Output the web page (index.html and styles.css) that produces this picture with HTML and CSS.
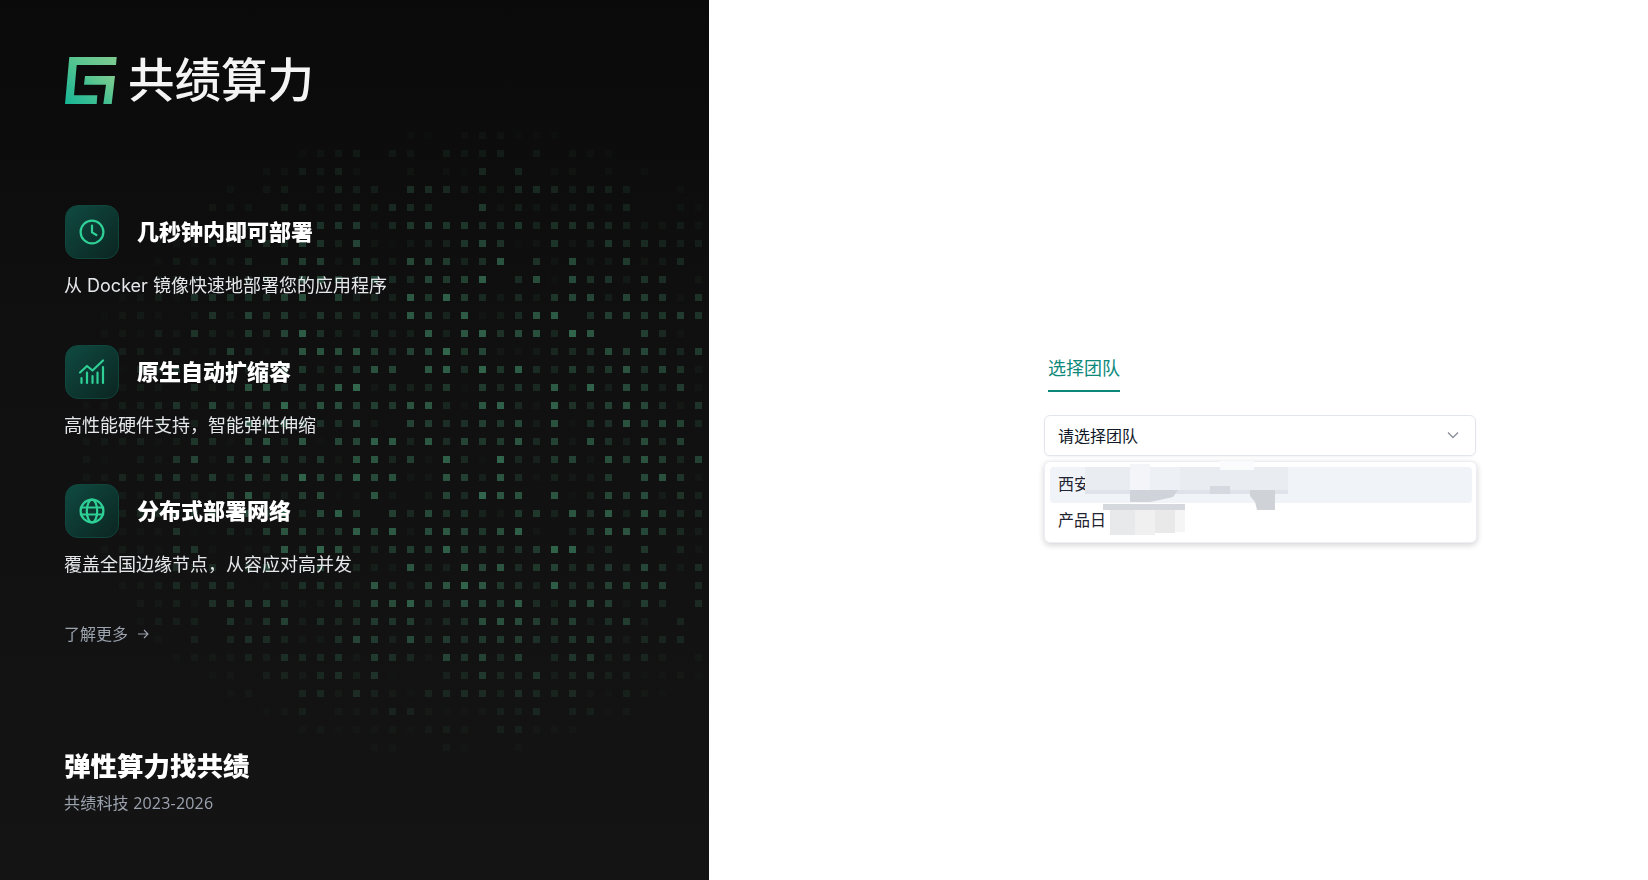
FILE: index.html
```html
<!DOCTYPE html>
<html lang="zh-CN">

<head>
  <meta charset="UTF-8">
  <title>共绩算力</title>
  <link rel="stylesheet" href="styles.css">
</head>

<body>
  <div class="pagina">
    <!-- Left brand panel -->
    <div class="panel">
      <canvas id="puntos" class="puntos" width="709" height="880"></canvas>

      <div class="logo">
        <svg class="logo-marca" width="53" height="47" viewBox="0 0 53 47">
          <defs>
            <linearGradient id="g-logo" x1="0" y1="1" x2="1" y2="0">
              <stop offset="0" stop-color="#17b596" />
              <stop offset="0.6" stop-color="#5cc690" />
              <stop offset="1" stop-color="#7fcc90" />
            </linearGradient>
          </defs>
          <path fill="url(#g-logo)" d="M4.3 0H51.7L51 8H11.7L9 38.3H32.3L31.7 47H0Z" />
          <path fill="url(#g-logo)" d="M20 19H50L46.7 47H38.3L41 27.7H19Z" />
        </svg>
        <span class="logo-texto">共绩算力</span>
      </div>

      <div class="funciones">
        <div class="funcion">
          <div class="funcion-cabeza">
            <div class="icono">
              <svg width="28" height="28" viewBox="0 0 28 28" fill="none" stroke="#2fd096" stroke-width="2.2" stroke-linecap="round" stroke-linejoin="round">
                <circle cx="14" cy="14" r="11.4" />
                <path d="M14 7.6V14.4L18.4 17" />
              </svg>
            </div>
            <h2>几秒钟内即可部署</h2>
          </div>
          <p>从 Docker 镜像快速地部署您的应用程序</p>
        </div>

        <div class="funcion">
          <div class="funcion-cabeza">
            <div class="icono">
              <svg width="28" height="28" viewBox="0 0 28 28" fill="none" stroke="#2fd096" stroke-width="2.2" stroke-linecap="round" stroke-linejoin="round">
                <path d="M2 14.5L9 8L14.5 12.5L25 2.5" />
                <path d="M3.5 25V20M9 25V14.5M14.5 25V18M19.5 25V14.5M25 25V9" />
              </svg>
            </div>
            <h2>原生自动扩缩容</h2>
          </div>
          <p>高性能硬件支持，智能弹性伸缩</p>
        </div>

        <div class="funcion">
          <div class="funcion-cabeza">
            <div class="icono">
              <svg width="28" height="28" viewBox="0 0 28 28" fill="none" stroke="#2fd096" stroke-width="2.2" stroke-linecap="round" stroke-linejoin="round">
                <circle cx="14" cy="14" r="11.4" />
                <path d="M2.8 10.5H25.2M2.8 17.5H25.2" />
                <ellipse cx="14" cy="14" rx="5.2" ry="11.4" />
              </svg>
            </div>
            <h2>分布式部署网络</h2>
          </div>
          <p>覆盖全国边缘节点，从容应对高并发</p>
        </div>
      </div>

      <a class="mas" href="#">了解更多
        <svg width="12" height="12" viewBox="0 0 12 12" fill="none" stroke="#9ca3af" stroke-width="1.1">
          <path d="M1 6H11M7 2L11 6L7 10" />
        </svg>
      </a>

      <div class="pie">
        <h3>弹性算力找共绩</h3>
        <p>共绩科技 2023-2026</p>
      </div>
    </div>

    <!-- Team selection -->
    <div class="lado">
      <div class="formulario">
        <div class="pestanas">
          <span class="pestana">选择团队</span>
        </div>

        <div class="selector">
          <div class="campo">
            <span>请选择团队</span>
            <svg width="14" height="14" viewBox="0 0 14 14" fill="none" stroke="#8b8f98" stroke-width="1.3">
              <path d="M2 4.5L7 9.5L12 4.5" />
            </svg>
          </div>

          <div class="menu">
            <div class="opcion activa">西安</div>
            <div class="opcion">产品日</div>
            <!-- mosaic over the blurred names -->
            <svg class="mosaico" width="432" height="82" viewBox="0 0 432 82">
              <rect x="40" y="6" width="203" height="27" fill="#e9ecf1" />
              <rect x="85" y="3" width="20" height="30" fill="#f3f5f8" />
              <rect x="105" y="6" width="30" height="27" fill="#edf0f4" />
              <rect x="175" y="0" width="34" height="9" fill="#fafbfc" />
              <rect x="40" y="29" width="203" height="4" fill="#dfe2e8" />
              <rect x="165" y="25" width="20" height="8" fill="#d6d9df" />
              <path d="M85 29H133L128 36L105 41H85Z" fill="#d0d3d9" />
              <path d="M205 29H230V49H212L210 41L205 35Z" fill="#cfd2d7" />
              <rect x="58" y="43" width="82" height="6" fill="#d5d8dd" />
              <rect x="65" y="49" width="25" height="25" fill="#e8e9eb" />
              <rect x="90" y="49" width="20" height="25" fill="#f0f0f1" />
              <rect x="110" y="49" width="20" height="23" fill="#e9e9ea" />
              <rect x="130" y="49" width="10" height="22" fill="#f5f5f5" />
            </svg>
          </div>
        </div>
      </div>
    </div>
  </div>

  <script src="script.js"></script>
</body>

</html>
```

FILE: styles.css
```css
* {
  box-sizing: border-box;
}

html,
body {
  margin: 0;
  padding: 0;
  height: 100%;
  background-color: #ffffff;
  font-family: "Inter", "Noto Sans CJK SC", "Noto Sans", sans-serif;
}

.pagina {
  display: flex;
  height: 880px;
  overflow: hidden;
}

/* Left panel */
.panel {
  position: relative;
  width: 709px;
  flex-shrink: 0;
  padding: 57px 0 0 65px;
  background: linear-gradient(180deg, #0a0a0a 0%, #101010 40%, #141414 100%);
  color: white;
}

.puntos {
  position: absolute;
  top: 0;
  left: 0;
}

.logo,
.funciones,
.mas,
.pie {
  position: relative;
}

.logo {
  display: flex;
  align-items: center;
  gap: 10px;
  height: 47px;
}

.logo-texto {
  font-size: 46.5px;
  font-weight: 500;
  line-height: 47px;
  color: #f4f4f4;
}

.funciones {
  margin-top: 101px;
  display: flex;
  flex-direction: column;
  gap: 31.5px;
}

.funcion {
  height: 108px;
}

.funcion-cabeza {
  display: flex;
  align-items: center;
  gap: 18px;
  margin-bottom: 12px;
}

.funcion h2 {
  margin: 0;
  font-size: 22px;
  font-weight: 900;
  line-height: 54px;
}

.funcion p {
  margin: 0 0 0 -1px;
  font-size: 18px;
  line-height: 30px;
  color: #e5e7eb;
}

.icono {
  display: flex;
  align-items: center;
  justify-content: center;
  width: 54px;
  height: 54px;
  border: 1px solid #11463d;
  border-radius: 13px;
  background: linear-gradient(135deg, #0f4a41 0%, #0b2521 100%);
}

.mas {
  display: flex;
  align-items: center;
  gap: 9px;
  margin: 30px 0 0 -1px;
  height: 24px;
  font-size: 16px;
  line-height: 24px;
  color: #9ca3af;
  text-decoration: none;
}

.pie {
  margin: 100px 0 0 -1px;
}

.pie h3 {
  margin: 0;
  font-size: 26.5px;
  font-weight: 900;
  line-height: 40px;
}

.pie p {
  margin: 5px 0 0;
  font-family: "Open Sans", "Noto Sans CJK SC", sans-serif;
  font-size: 16px;
  letter-spacing: 0.2px;
  line-height: 24px;
  color: #9ca3af;
}

/* Right side */
.lado {
  flex: 1;
  padding: 350px 0 0 335px;
}

.formulario {
  width: 433px;
}

.pestanas {
  display: flex;
  padding-left: 4px;
  height: 42px;
}

.pestana {
  height: 42px;
  border-bottom: 2px solid #0d897b;
  font-size: 18px;
  line-height: 38px;
  color: #0d897b;
}

.selector {
  position: relative;
  margin-top: 23px;
}

.campo {
  display: flex;
  align-items: center;
  justify-content: space-between;
  width: 432px;
  height: 41px;
  padding: 0 15px 2px 13px;
  border: 1px solid #e2e5ec;
  border-radius: 6px;
  font-size: 16px;
  color: #111827;
  box-shadow: 0 1px 2px rgba(0, 0, 0, 0.05);
}

.menu {
  position: absolute;
  top: 46px;
  left: 0;
  width: 433px;
  height: 82px;
  padding: 5px 4px 0 5px;
  border: 1px solid #eceef3;
  border-radius: 6px;
  background-color: white;
  box-shadow: 0 2px 6px rgba(0, 0, 0, 0.18);
}

.opcion {
  height: 36px;
  padding-left: 8px;
  border-radius: 4px;
  font-size: 16px;
  line-height: 34px;
  color: #1f2430;
}

.opcion.activa {
  background-color: #f0f3f8;
}

.mosaico {
  position: absolute;
  top: -1px;
  left: 0;
}
```

FILE: script.js
```js
// Dot matrix behind the left panel
const lienzo = document.getElementById('puntos');
const ctx = lienzo.getContext('2d');

let semilla = 7321;
function azar() {
  semilla = (semilla * 16807) % 2147483647;
  return semilla / 2147483647;
}

for (let fila = 0; fila < 49; fila++) {
  for (let col = 0; col < 40; col++) {
    const x = 14 + col * 18;
    const y = 9 + fila * 18;
    const dx = (x - 450) / 390;
    const dy = (y - 440) / 325;
    const cerca = Math.max(0, 1 - Math.sqrt(dx * dx + dy * dy));
    const brillo = azar() * Math.min(1, cerca * 1.8);
    if (brillo < 0.03) continue;
    ctx.fillStyle = `rgba(68, 148, 110, ${(brillo * 0.66).toFixed(3)})`;
    ctx.fillRect(x - 3, y - 3, 7, 7);
  }
}
```
